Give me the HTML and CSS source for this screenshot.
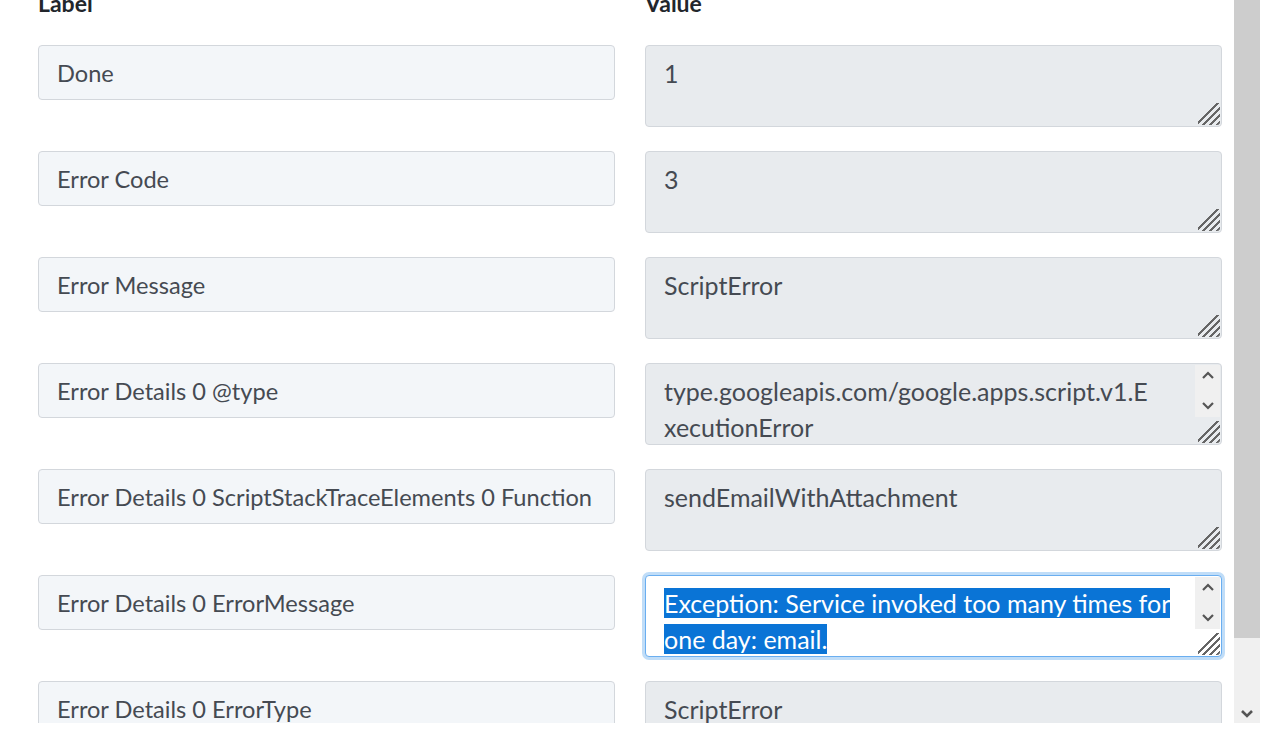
FILE: index.html
```html
<!DOCTYPE html>
<html lang="en">
<head>
<meta charset="utf-8">
<title>Step output</title>
<link rel="stylesheet" href="styles.css">
</head>
<body>
<div class="frame">
  <div class="viewport">
    <div class="sheet">
      <div class="heads">
        <div class="head">Label</div>
        <div class="head">Value</div>
      </div>
      <div class="rows">
        <div class="label-box">Done</div>
        <div class="value-box"><div class="text">1</div><span class="grip"></span></div>

        <div class="label-box">Error Code</div>
        <div class="value-box"><div class="text">3</div><span class="grip"></span></div>

        <div class="label-box">Error Message</div>
        <div class="value-box"><div class="text">ScriptError</div><span class="grip"></span></div>

        <div class="label-box">Error Details 0 @type</div>
        <div class="value-box">
          <div class="text">type.googleapis.com/google.apps.script.v1.E<br>xecutionError</div>
          <div class="mini-scroll">
            <svg viewBox="0 0 14 9" class="chev"><path d="M2 7 L7 2 L12 7" /></svg>
            <svg viewBox="0 0 14 9" class="chev"><path d="M2 2 L7 7 L12 2" /></svg>
          </div>
          <span class="grip"></span>
        </div>

        <div class="label-box">Error Details 0 ScriptStackTraceElements 0 Function</div>
        <div class="value-box"><div class="text">sendEmailWithAttachment</div><span class="grip"></span></div>

        <div class="label-box">Error Details 0 ErrorMessage</div>
        <div class="value-box focused">
          <div class="text"><span class="sel">Exception: Service invoked too many times for</span><br><span class="sel">one day: email.</span></div>
          <div class="mini-scroll">
            <svg viewBox="0 0 14 9" class="chev"><path d="M2 7 L7 2 L12 7" /></svg>
            <svg viewBox="0 0 14 9" class="chev"><path d="M2 2 L7 7 L12 2" /></svg>
          </div>
          <span class="grip"></span>
        </div>

        <div class="label-box">Error Details 0 ErrorType</div>
        <div class="value-box"><div class="text">ScriptError</div><span class="grip"></span></div>
      </div>
    </div>
  </div>
  <div class="scrollbar">
    <div class="thumb"></div>
    <div class="track"></div>
    <svg viewBox="0 0 14 9" class="page-arrow"><path d="M2 2 L7 7 L12 2" /></svg>
  </div>
</div>
</body>
</html>
```

FILE: styles.css
```css
html, body {
  margin: 0;
  padding: 0;
  background: #ffffff;
}

body {
  font-family: Lato, "Open Sans", "Liberation Sans", sans-serif;
  color: #454a52;
}

.frame {
  display: flex;
  width: 1260px;
  height: 723px;
}

.viewport {
  flex: 1;
  overflow: hidden;
}

.sheet {
  margin-top: -10px;
  padding-left: 38px;
}

.heads {
  display: grid;
  grid-template-columns: 577px 577px;
  column-gap: 30px;
  margin-bottom: 28px;
}

.head {
  font-size: 23px;
  font-weight: 700;
  line-height: 27px;
  height: 27px;
  color: #22262c;
}

.rows {
  display: grid;
  grid-template-columns: 577px 577px;
  column-gap: 30px;
  row-gap: 24px;
  align-items: start;
}

.label-box {
  box-sizing: border-box;
  height: 55px;
  padding: 0 18px;
  display: flex;
  align-items: center;
  background: #f3f6f9;
  border: 1px solid #d3d7dc;
  border-radius: 4px;
  font-size: 23.6px;
  white-space: nowrap;
  overflow: hidden;
}

.value-box {
  position: relative;
  box-sizing: border-box;
  height: 82px;
  padding: 9px 18px 0;
  background: #e8ebee;
  border: 1px solid #d3d7dc;
  border-radius: 4px;
  font-size: 25px;
  line-height: 36px;
  overflow: hidden;
}

.value-box.focused {
  background: #ffffff;
  border-color: #6aaef0;
  box-shadow: 0 0 0 3px #c0ddf8;
  overflow: visible;
}

.text {
  white-space: nowrap;
}

.sel {
  background: #0a74d6;
  color: #ffffff;
}

/* resize grip in the lower right corner */
.grip {
  position: absolute;
  right: 1px;
  bottom: 1px;
  width: 22px;
  height: 22px;
  background:
    linear-gradient(135deg, transparent 0 42%, #666666 42% 49%, transparent 49% 58%, #666666 58% 65%, transparent 65% 74%, #666666 74% 81%, transparent 81% 90%, #666666 90% 96%, transparent 96%);
  border-bottom-right-radius: 3px;
}

/* small inner scrollbar of an overflowing field */
.mini-scroll {
  position: absolute;
  top: 1px;
  right: 1px;
  width: 25px;
  height: 52px;
  background: #f0f0f0;
  display: flex;
  flex-direction: column;
  justify-content: space-between;
  align-items: center;
  padding: 6px 0 7px;
  box-sizing: border-box;
}

.chev {
  width: 14px;
  height: 9px;
  fill: none;
  stroke: #555555;
  stroke-width: 2.2;
}

/* page scrollbar */
.scrollbar {
  width: 26px;
  background: #f0f0f0;
  display: flex;
  flex-direction: column;
  align-items: center;
}

.thumb {
  align-self: stretch;
  height: 638px;
  background: #cdcdcd;
}

.track {
  flex: 1;
}

.page-arrow {
  width: 14px;
  height: 9px;
  margin-bottom: 5px;
  fill: none;
  stroke: #555555;
  stroke-width: 2.6;
}
```
